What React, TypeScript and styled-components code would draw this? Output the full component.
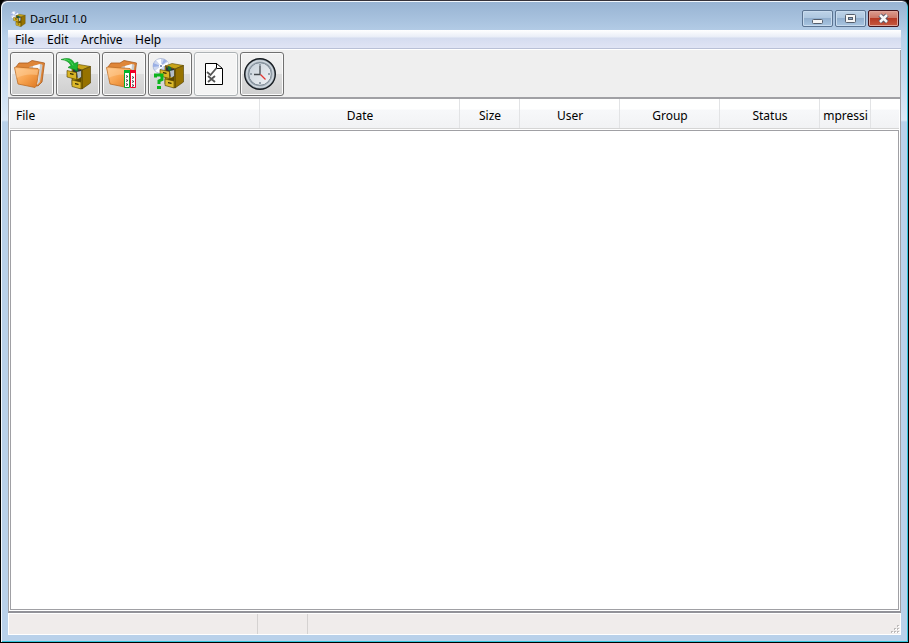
import React from "react";
import styled, { createGlobalStyle, css } from "styled-components";

const GlobalStyle = createGlobalStyle`
  *, *::before, *::after { box-sizing: border-box; }
  body {
    margin: 0;
    background: #000;
    font: 12px/16px "Noto Sans", "Open Sans", sans-serif;
    color: #000;
    overflow: hidden;
  }
  button { font: inherit; color: inherit; }
`;

const Window = styled.div`
  display: flex;
  flex-direction: column;
  height: 100vh;
  padding: 0 7px 7px 6px;
  border: 1px solid #000;
  border-top-color: #35323a;
  border-radius: 7px 7px 0 0;
  box-shadow: inset 1px 1px 0 #f2f7fc, inset -1px -1px 0 #35c4dc;
  background: linear-gradient(#97b3d2 0, #a9c3df 20px, #b9d1ea 36px, #c9dcf0 76px, #dce9f7 119px, #b9d1ea 121px);
`;

const TitleBar = styled.header`
  display: flex;
  align-items: center;
  flex: none;
  gap: 4px;
  height: 29px;
  padding: 6px 2px 0 3px;
`;

const Title = styled.h1`
  flex: 1;
  margin: 0;
  font-size: 11px;
  font-weight: normal;
  line-height: 16px;
`;

const WindowControls = styled.div`
  display: flex;
  gap: 2px;
`;

const ControlButton = styled.button<{ $danger?: boolean }>`
  display: flex;
  align-items: center;
  justify-content: center;
  width: 31px;
  height: 17px;
  padding: 0;
  border: 1px solid ${(p) => (p.$danger ? "#43141c" : "#5b7391")};
  border-radius: 2px;
  box-shadow: inset 0 0 0 1px ${(p) => (p.$danger ? "#dfa499" : "#c8dbee")};
  background: ${(p) =>
    p.$danger
      ? "linear-gradient(#dc9d90 0, #cc7565 48%, #b63a25 50%, #c65a40 100%)"
      : "linear-gradient(#bed3e8 0, #adc6df 48%, #92afce 50%, #a9c6e2 100%)"};
`;

const Client = styled.div`
  display: flex;
  flex: 1;
  flex-direction: column;
  min-height: 0;
  margin-left: 1px;
  background: #fff;
`;

const MenuBar = styled.nav`
  display: flex;
  flex: none;
  height: 20px;
  border-bottom: 1px solid #fff;
  box-shadow: inset 0 -1px 0 #b9c0d6;
  background: linear-gradient(#fff 0, #e9edf7 7px, #d5dcef 8px, #e1e5f5 100%);
`;

const MenuItem = styled.button<{ $width: number }>`
  width: ${(p) => p.$width}px;
  padding: 1px 0 0 7px;
  border: 0;
  background: none;
  line-height: 18px;
  text-align: left;
  white-space: nowrap;
`;

const ToolBar = styled.div`
  display: flex;
  flex: none;
  gap: 2px;
  height: 49px;
  padding: 2px;
  border-bottom: 2px solid #a0a0a4;
  border-right: 1px solid #a0a0a4;
  background: #efefef;
`;

const ToolButton = styled.button`
  display: flex;
  align-items: center;
  justify-content: center;
  width: 44px;
  height: 44px;
  padding: 0 4px 0 0;
  border: 1px solid #707070;
  border-radius: 3px;
  box-shadow: inset 0 0 0 1px #fbfbfb;
  background: linear-gradient(#f2f2f2 0, #ebebeb 49%, #dddddd 50%, #cfcfcf 100%);

  &:disabled {
    border-color: #adb2b5;
    background: #f4f4f4;
  }
`;

const ListFrame = styled.main`
  display: flex;
  flex: 1;
  flex-direction: column;
  min-height: 0;
  padding: 0 1px 1px;
  border-left: 1px solid #a0a0a4;
  border-right: 1px solid #a0a0a4;
  border-bottom: 2px solid #929298;
`;

const HeaderTable = styled.table`
  flex: none;
  width: 100%;
  height: 30px;
  border-collapse: separate;
  border-spacing: 0;
  table-layout: fixed;
  border-bottom: 1px solid #d5d5d5;
  background: linear-gradient(#fff 0, #fff 10px, #f7f8fa 11px, #f1f2f4 100%);
`;

const HeaderCell = styled.th<{ $width?: number; $left?: boolean }>`
  height: 29px;
  padding: ${(p) => (p.$left ? "4px 6px 0" : "4px 2px 0 3px")};
  font-weight: normal;
  text-align: ${(p) => (p.$left ? "left" : "center")};
  ${(p) =>
    p.$width &&
    css`
      width: ${p.$width}px;
      border-right: 1px solid #e2e3e5;
    `}
`;

const CellLabel = styled.span`
  display: flex;
  justify-content: center;
  overflow: hidden;
  white-space: nowrap;
`;

const FileList = styled.section`
  flex: 1;
  margin-top: 1px;
  border: 1px solid #a0a0a4;
  background: #fff;
`;

const StatusBar = styled.footer`
  display: flex;
  flex: none;
  height: 22px;
  border: 1px solid #fff;
  background: #f0eceb;
`;

const StatusPane = styled.div<{ $width?: number }>`
  display: flex;
  align-items: flex-end;
  justify-content: flex-end;
  ${(p) =>
    p.$width
      ? css`
          width: ${p.$width}px;
          border-right: 1px solid #d5d2d1;
        `
      : css`
          flex: 1;
        `}
`;

const CabinetShapes = () => (
  <>
    <path d="M13 10 20 7.500 31.500 9.500 23 13z" fill="#c8a41a" stroke="#5b4700" strokeWidth=".6" />
    <path d="m23 13 8.500-3.500V26L23 32z" fill="#967200" stroke="#4d3c00" strokeWidth=".6" />
    <path d="m13 10 10 3v19l-10-4z" fill="#b08c05" stroke="#4d3c00" strokeWidth=".6" />
    <path d="m14 11 8.500 2v8L14 20z" fill="#30353a" />
    <path d="m16 10 3 1v4l-3-1z" fill="#12703a" />
    <path d="m18 15 4-1v6l-3 2z" fill="#b4bec8" />
    <path d="m8 13.500 9.500 2v7L8 20z" fill="#d9b425" stroke="#4d3c00" strokeWidth=".6" />
    <path d="m13 23 9 2v7l-9-2.500z" fill="#dcb92b" stroke="#4d3c00" strokeWidth=".6" />
    <path d="m17.500 22.500 5-2v4l-1 .5-6-1.500z" fill="#5b4700" />
    <path d="m11 16 3.500.700v1.300L11 17.300zm5 10 3.500.700V28l-3.500-.700z" fill="#2c2500" />
  </>
);

const DiscShapes = () => (
  <>
    <ellipse cx="10" cy="9" rx="8" ry="7.500" fill="#ccd7f0" stroke="#96a4c8" strokeWidth=".6" />
    <path d="M10 9 5 3l5-1zm0 0 7-4 1 4zm0 0-1 7-5-2z" fill="#fff" />
    <path d="m10 9 3-7 3 2zM10 9 2 6v4z" fill="#9aafe5" />
    <circle cx="10" cy="9" r="1.700" fill="#8393b6" stroke="#fff" />
  </>
);

const AppIcon = () => (
  <svg width="16" height="16" viewBox="1 1 32 32" aria-hidden="true">
    <DiscShapes />
    <CabinetShapes />
  </svg>
);

const FolderShapes = () => (
  <>
    <defs>
      <linearGradient id="folder" x1="0" y1="0" x2="1" y2="1">
        <stop offset="0" stopColor="#ffc98c" />
        <stop offset=".5" stopColor="#f7a34f" />
        <stop offset="1" stopColor="#dc7620" />
      </linearGradient>
    </defs>
    <path d="M2 9 5 5h9l4-2.500L30.500 5 28 24l-4 4L5 22z" fill="#df8638" stroke="#a95c1e" strokeWidth=".8" />
    <path d="m15 9 12-3 1.500 1-2.500 17-3 3z" fill="#c9c9c9" />
    <path d="m19 8 7-2-2 20-4 1z" fill="#fbfbfb" />
    <path d="M.5 9.500 2 9l22 1.500 1 1L22.500 28l-1.500 1.500L4 26z" fill="url(#folder)" stroke="#bc6c25" strokeWidth=".8" />
    <path d="M1.500 10.500 24 12l-.7 5Q12 15 2.500 20z" fill="#ffd2a0" opacity=".45" />
  </>
);

const FolderIcon = () => (
  <svg width="32" height="32" viewBox="0 0 32 32" aria-hidden="true"><FolderShapes /></svg>
);

const CabinetInIcon = () => (
  <svg width="34" height="34" viewBox="0 0 34 34" aria-hidden="true">
    <CabinetShapes />
    <path d="M2 2.500Q12-1 15.500 6.500L19 5l-1 8.500-9-3 3-2Q9 3 2 2.500z" fill="#1fb532" stroke="#0c8a1c" strokeWidth=".6" />
    <path d="M5 2.500q7 0 9 6" fill="none" stroke="#4fd45e" />
  </svg>
);

const FolderDiffIcon = () => (
  <svg width="32" height="32" viewBox="0 0 32 32" aria-hidden="true">
    <FolderShapes />
    <path d="M18.500 12.500h5v17h-5z" fill="#fff" stroke="#00a52b" />
    <path d="M24.500 12.500h5v17h-5z" fill="#fff" stroke="#f00027" />
    <path d="M18 12h6v3h-6z" fill="#00b52b" />
    <path d="M24 12h6v3h-6z" fill="#f00027" />
    <path d="m20 17.500 2 1-2 1m0 2 2 1-2 1m0 2 2 1-2 1m6-9 2 1-2 1m0 2 2 1-2 1m0 2 2 1-2 1" fill="none" stroke="#333" strokeWidth=".9" />
  </svg>
);

const CabinetQuestionIcon = () => (
  <svg width="34" height="34" viewBox="0 0 34 34" aria-hidden="true">
    <DiscShapes />
    <g transform="translate(1 -1)"><CabinetShapes /></g>
    <path d="M4.500 20.500V18h6.500v4.500L8 24v3" fill="none" stroke="#0db41c" strokeWidth="3" />
    <path d="M6 29h4v3H6z" fill="#0db41c" />
  </svg>
);

const ChecklistIcon = () => (
  <svg width="22" height="24" viewBox="0 0 22 24" aria-hidden="true">
    <path d="M2 1h12l6 6v15H2z" fill="#fff" />
    <path d="M2.500 22V1.500H14M19.500 7v15.500H2" fill="none" stroke="#000" />
    <path d="M13.500 1.500v5h6z" fill="#fff" stroke="#000" />
    <path d="m4 10 3.500 3 6-7M5 14l7 6m0-6-7 6" fill="none" stroke="#555" strokeWidth="1.800" />
  </svg>
);

const ClockIcon = () => (
  <svg width="34" height="34" viewBox="0 0 34 34" aria-hidden="true">
    <defs>
      <linearGradient id="rim" x1="0" y1="0" x2="1" y2="1">
        <stop offset="0" stopColor="#b9c3cd" />
        <stop offset=".5" stopColor="#8f9ca8" />
        <stop offset="1" stopColor="#c3ccd4" />
      </linearGradient>
      <linearGradient id="face" x1="0" y1="0" x2="1" y2="1">
        <stop offset="0" stopColor="#c6d0da" />
        <stop offset="1" stopColor="#f2f4f6" />
      </linearGradient>
    </defs>
    <circle cx="17" cy="17" r="15.300" fill="url(#rim)" stroke="#161b20" strokeWidth="1.400" />
    <circle cx="17" cy="17" r="13.200" fill="none" stroke="#d5dce2" strokeWidth="1.200" />
    <circle cx="17" cy="17" r="11.300" fill="url(#face)" stroke="#7d8994" />
    <path d="M17 7v2m0 16v2M7 17h2m16 0h2" stroke="#94a0aa" strokeWidth="2" />
    <path d="M17 9v8.500h-6" fill="none" stroke="#43484d" strokeWidth="1.300" />
    <path d="m17.500 17.500 5 5" stroke="#e53431" strokeWidth="1.300" />
  </svg>
);

const MinimizeGlyph = () => (
  <svg width="11" height="12" viewBox="0 0 11 12" aria-hidden="true">
    <rect x=".5" y="6.500" width="10" height="4" rx="1" fill="#f6f6f6" stroke="#555e6c" />
  </svg>
);

const MaximizeGlyph = () => (
  <svg width="11" height="9" viewBox="0 0 11 9" aria-hidden="true">
    <rect x=".5" y=".5" width="10" height="8" rx="1" fill="#f6f6f6" stroke="#555e6c" />
    <rect x="3.500" y="3.500" width="4" height="2" fill="#8da9c8" stroke="#555e6c" />
  </svg>
);

const CloseGlyph = () => (
  <svg width="13" height="11" viewBox="0 0 13 11" aria-hidden="true">
    <path d="m3 2 7 7m0-7-7 7" stroke="#555566" strokeWidth="4.500" />
    <path d="m3 2 7 7m0-7-7 7" stroke="#f7f7f7" strokeWidth="2.500" />
  </svg>
);

const SizeGrip = () => (
  <svg width="10" height="10" viewBox="0 0 10 10" aria-hidden="true">
    <path d="M7 1h2v2H7zM4 4h2v2H4zm3 0h2v2H7zM1 7h2v2H1zm3 0h2v2H4zm3 0h2v2H7z" fill="#bdbab9" />
    <path d="M8 2h2v1H8zM5 5h2v1H5zm3 0h2v1H8zM2 8h2v1H2zm3 0h2v1H5zm3 0h2v1H8z" fill="#fff" />
  </svg>
);

const menus = [
  { label: "File", width: 32 },
  { label: "Edit", width: 34 },
  { label: "Archive", width: 54 },
  { label: "Help", width: 40 },
];

const tools = [
  { label: "Open archive", Icon: FolderIcon },
  { label: "Create archive", Icon: CabinetInIcon },
  { label: "Compare archive", Icon: FolderDiffIcon },
  { label: "Test archive", Icon: CabinetQuestionIcon },
  { label: "Select files", Icon: ChecklistIcon, disabled: true },
  { label: "Schedule", Icon: ClockIcon },
];

const columns = [
  { label: "Date", width: 200 },
  { label: "Size", width: 60 },
  { label: "User", width: 100 },
  { label: "Group", width: 100 },
  { label: "Status", width: 100 },
  { label: "Compression", width: 51 },
];

export default function App() {
  return (
    <>
      <GlobalStyle />
      <Window>
        <TitleBar>
          <AppIcon />
          <Title>DarGUI 1.0</Title>
          <WindowControls>
            <ControlButton aria-label="Minimize"><MinimizeGlyph /></ControlButton>
            <ControlButton aria-label="Maximize"><MaximizeGlyph /></ControlButton>
            <ControlButton aria-label="Close" $danger><CloseGlyph /></ControlButton>
          </WindowControls>
        </TitleBar>
        <Client>
          <MenuBar>
            {menus.map((m) => (
              <MenuItem key={m.label} $width={m.width}>{m.label}</MenuItem>
            ))}
          </MenuBar>
          <ToolBar role="toolbar">
            {tools.map(({ label, Icon, disabled }) => (
              <ToolButton key={label} aria-label={label} disabled={disabled}><Icon /></ToolButton>
            ))}
          </ToolBar>
          <ListFrame>
            <HeaderTable>
              <thead>
                <tr>
                  <HeaderCell $width={250} $left>File</HeaderCell>
                  {columns.map((c) => (
                    <HeaderCell key={c.label} $width={c.width}><CellLabel>{c.label}</CellLabel></HeaderCell>
                  ))}
                  <HeaderCell as="td" />
                </tr>
              </thead>
            </HeaderTable>
            <FileList aria-label="Files" />
          </ListFrame>
          <StatusBar>
            <StatusPane $width={249} />
            <StatusPane $width={50} />
            <StatusPane><SizeGrip /></StatusPane>
          </StatusBar>
        </Client>
      </Window>
    </>
  );
}
